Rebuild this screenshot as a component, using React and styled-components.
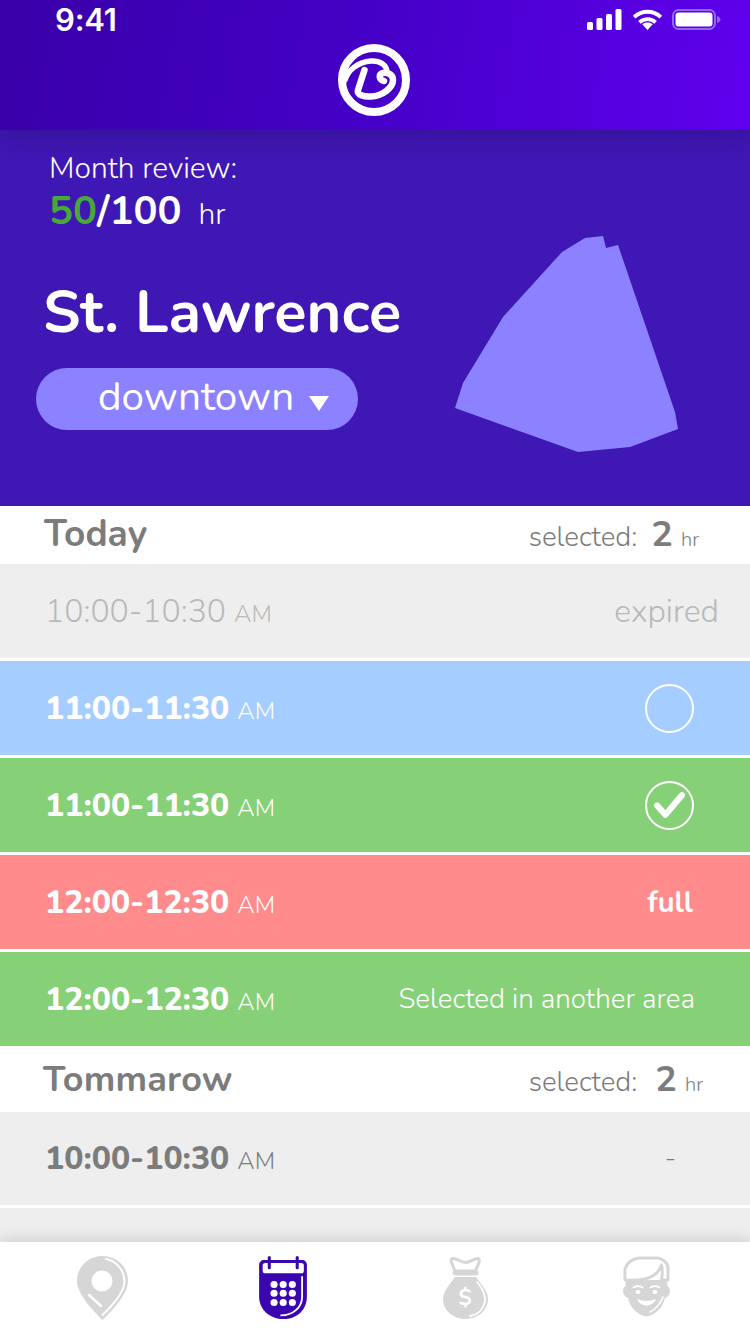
import React from "react";
import styled, { createGlobalStyle } from "styled-components";

const Global = createGlobalStyle`
  html, body { margin: 0; padding: 0; background: #fff; }
  * { box-sizing: border-box; }
`;

const FONT = `"Nunito", "Lato", "Open Sans", sans-serif`;

const Page = styled.div`
  width: 750px; height: 1334px; overflow: hidden; display: flex; flex-direction: column;
  font-family: ${FONT}; background: #fff;
`;
const Header = styled.header`
  position: relative; z-index: 2; height: 130px; flex: none;
  background: linear-gradient(100deg, #3a00a8 0%, #4300c4 45%, #6000ee 100%);
  box-shadow: 0 6px 22px rgba(30, 10, 90, 0.3);
`;
const StatusBar = styled.div`
  height: 44px; display: flex; align-items: center; justify-content: space-between;
  padding: 0 29px 0 55px;
`;
const Clock = styled.span`
  font: 600 31px/1 "Inter", sans-serif; color: #fff; margin-top: -5px; letter-spacing: -0.2px;
`;
const LogoRow = styled.div`display: flex; justify-content: center; margin-left: -2px;`;
const Hero = styled.section`
  height: 376px; flex: none; display: flex; background: #3f17b4; color: #fff;
`;
const HeroLeft = styled.div`display: flex; flex-direction: column; padding-top: 20px;`;
const ReviewLabel = styled.div`font-size: 30px; font-weight: 300; line-height: 36px; margin: 1px 0 0 49px;`;
const ReviewValue = styled.div`
  margin-left: 49px; margin-top: 1px; display: flex; align-items: baseline;
  font-size: 40px; font-weight: 700; line-height: 46px;
`;
const Done = styled.span`color: #46a93a;`;
const Unit = styled.span`font-size: 30px; font-weight: 300; margin-left: 17px;`;
const Place = styled.h1`
  margin: 39px 0 0 43px; font-size: 59.500px; font-weight: 700; line-height: 72px; white-space: nowrap;
`;
const Pill = styled.div`
  margin: 19px 0 0 36px; width: 322px; height: 62px; border-radius: 31px; background: #8c82ff;
  display: flex; align-items: center; padding: 0 0 6px 62px; gap: 15px;
  font-size: 40.500px; font-weight: 400;
`;
const Caret = styled.span`
  width: 0; height: 0; margin-top: 15px;
  border-left: 10px solid transparent; border-right: 10px solid transparent; border-top: 15px solid #fff;
`;
const MapShape = styled.svg`margin: 106px 72px 0 auto; flex: none;`;

const List = styled.div`flex: 1; min-height: 0; overflow: hidden;`;
const DayHeader = styled.div`
  height: ${p => p.$h}px; display: flex; align-items: center; justify-content: space-between;
  padding: 0 ${p => p.$right}px 0 ${p => p.$left}px; color: #7c7c7c;
`;
const DayName = styled.span`font-size: ${p => p.$size}px; font-weight: 700; letter-spacing: ${p => p.$ls || 0}px; margin-top: -2px;`;
const Selected = styled.span`display: flex; align-items: baseline; font-size: 27.700px; font-weight: 300; margin-top: -2px;`;
const SelectedNum = styled.b`font-size: 36px; font-weight: 700; margin: 0 8px 0 ${p => p.$gap}px;`;
const SelectedUnit = styled.span`font-size: 20px;`;

const TONES = {
  gray: "#eeeeee", blue: "#a6cdff", green: "#86d077", red: "#ff8b8c",
};
const Row = styled.div`
  height: ${p => p.$h || 94}px; margin-bottom: 3px; display: flex; align-items: center; justify-content: space-between;
  padding: 0 ${p => p.$right ?? 56}px 0 45px;
  background: ${p => TONES[p.$tone]};
  color: ${p => p.$ink || "#fff"};
`;
const Time = styled.span`
  font-size: 32px; font-weight: ${p => (p.$light ? 300 : 800)}; display: flex; align-items: baseline;
`;
const Meridiem = styled.span`font-size: 24px; font-weight: 300; margin-left: 8px;`;
const Note = styled.span`
  font-size: ${p => p.$size || 28}px; font-weight: ${p => p.$weight || 300};
`;
const Circle = styled.span`
  width: 49px; height: 49px; border: 2px solid #fff; border-radius: 50%;
  display: flex; align-items: center; justify-content: center;
`;

const TabBar = styled.nav`
  position: relative; z-index: 2; height: 92px; flex: none; background: #fff;
  box-shadow: 0 -3px 14px rgba(0, 0, 0, 0.13);
  display: flex; align-items: flex-start;
  padding: 14px 0 0 77px;
`;
const Tab = styled.div`display: flex; margin-left: ${p => p.$gap || 0}px;`;

const Signal = () => (
  <svg width="35" height="21" viewBox="0 0 35 21" fill="#fff">
    <rect x="0" y="13" width="6" height="8" rx="1.500" />
    <rect x="9.500" y="9" width="6" height="12" rx="1.500" />
    <rect x="19" y="5" width="6" height="16" rx="1.500" />
    <rect x="28.500" y="0" width="6" height="21" rx="1.500" />
  </svg>
);
const Wifi = () => (
  <svg width="31" height="21" viewBox="0 0 32 22" fill="none" stroke="#fff" strokeWidth="4">
    <path d="M2 8.500C10 1 22 1 30 8.500" />
    <path d="M7.500 14C12.500 9.500 19.500 9.500 24.500 14" />
    <path d="M16 22l-5.500-6C13.500 13.500 18.500 13.500 21.500 16z" fill="#fff" stroke="none" />
  </svg>
);
const Battery = () => (
  <svg width="49" height="21" viewBox="0 0 49 21" fill="none">
    <rect x="1" y="1" width="42" height="19" rx="5.500" stroke="#8f6ae8" strokeWidth="2" />
    <rect x="3.500" y="3.500" width="37" height="14" rx="3" fill="#fff" />
    <path d="M45 7c2 .6 3.500 2 3.500 3.500s-1.500 2.900-3.500 3.500z" fill="#8f6ae8" />
  </svg>
);
const StatusIcons = styled.div`display: flex; align-items: center; gap: 9.500px; margin-top: -5px;`;

const Logo = () => (
  <svg width="72" height="72" viewBox="0 0 72 72" fill="none" stroke="#fff" strokeLinecap="round" strokeLinejoin="round">
    <circle cx="36" cy="36" r="32" strokeWidth="8" />
    <path d="M7 36C10 26 20 18 33 17C42 16.500 49 21 49 28.500" strokeWidth="5.500" />
    <path d="M26.500 26L20 46C18.500 51 26 53 33 52.500C44 52 55 44 55 36C55 30 49 28 45 29C41 30 40 35 46 37" strokeWidth="6.500" />
  </svg>
);

const GRAY = "#d6d6d6";
const PinIcon = () => (
  <svg width="51" height="64" viewBox="0 0 51 64">
    <path d="M25.500 0C11 0 0 11 0 25C0 37 14 53 25.500 64C37 53 51 37 51 25C51 11 40 0 25.500 0Z" fill={GRAY} />
    <circle cx="25" cy="25" r="10.500" fill="#fff" />
    <path d="M29 3C39 5 47.500 14 47.500 25C47.500 35 36 49 25.500 59" fill="none" stroke="#fff" strokeWidth="2" strokeLinecap="round" />
    <path d="M12 39L24 50" fill="none" stroke="#fff" strokeWidth="2.500" strokeLinecap="round" />
  </svg>
);
const dotXs = [14.7, 23.7, 32.7];
const dotYs = [28, 36.7, 45.7];
const CalendarIcon = () => (
  <svg width="48" height="63" viewBox="0 0 47 62">
    <path d="M5 4H42C45 4 47 6 47 9V40C47 53 37 62 24 62C11 62 0 53 0 40V9C0 6 2 4 5 4Z" fill="#3a06b0" />
    <rect x="3.500" y="7" width="40.500" height="10" rx="2.500" fill="#fff" />
    <rect x="8.500" y="0" width="3" height="13" rx="1.500" fill="#3a06b0" />
    <rect x="36" y="0" width="3" height="13" rx="1.500" fill="#3a06b0" />
    {dotYs.map(y => dotXs.map(x => <circle key={`${x}-${y}`} cx={x} cy={y} r="3.500" fill="#fff" />))}
    <path d="M42.300 20V40C42.300 50 34 58.500 21 58.500" fill="none" stroke="#fff" strokeWidth="1.800" />
  </svg>
);
const BagIcon = () => (
  <svg width="45" height="63" viewBox="0 0 45 63">
    <path d="M9.500 2.500C13 2 18 6 22.500 6.500C27 6 32 2 35 2.500C37 3 36.500 6 35 9L32.500 15H12L9.500 9C8 6 7.500 3 9.500 2.500Z" fill="#fff" stroke={GRAY} strokeWidth="3" strokeLinejoin="round" />
    <rect x="9.500" y="14" width="26" height="5.500" rx="2.700" fill={GRAY} />
    <path d="M12 21H33C39 30 45 35 45 43C45 54 35 63 22.500 63C10 63 0 54 0 43C0 35 6 30 12 21Z" fill={GRAY} />
    <path d="M34 26C39 32 42 37 42 43C42 52 35 59 27 60" fill="none" stroke="#fff" strokeWidth="1.800" strokeLinecap="round" />
    <text x="22" y="49" fontFamily="Nunito, sans-serif" fontWeight="700" fontSize="22" fill="#fff" textAnchor="middle">$</text>
  </svg>
);
const FaceIcon = () => (
  <svg width="47" height="61" viewBox="0 0 47 61">
    <path d="M3 24H44L44.500 30C46 31 47 33 47 35C47 38 45 41 42 42C40 51 33 59 23.500 60.500C14 59 7 51 5 42C2 41 0 38 0 35C0 33 1 31 2.500 30Z" fill={GRAY} />
    <path d="M2 24V13C4 6 11 2 17 2H34C39 2 45 7 45 12V24H38.500C39.500 19 39.500 14 38.500 9C36 16 30 21 22 23C15 24.500 8 24.500 2 24Z" fill="#fff" stroke={GRAY} strokeWidth="3" strokeLinejoin="round" />
    <path d="M10.500 31.500C13 30 17 30 19.500 31.500M27.500 31.500C30 30 34 30 36.500 31.500" fill="none" stroke="#fff" strokeWidth="1.800" strokeLinecap="round" />
    <ellipse cx="15" cy="36" rx="2.500" ry="2" fill="#fff" />
    <ellipse cx="32" cy="36" rx="2.500" ry="2" fill="#fff" />
    <path d="M14 43C20 45.500 27 45.500 33 43C31 48 26 49.500 23.500 49.500C21 49.500 16 48 14 43Z" fill="#fff" />
    <path d="M40 41C37 49 33 53 27 56" fill="none" stroke="#fff" strokeWidth="1.500" strokeLinecap="round" />
  </svg>
);

const CheckMark = () => (
  <svg width="33" height="29" viewBox="0 0 32 28" fill="none" stroke="#fff" strokeWidth="6" strokeLinecap="round" strokeLinejoin="round">
    <path d="M4 14L12 23L28 4" />
  </svg>
);

function Slot({ time, tone, ink, bold = true, right, h, children }) {
  return (
    <Row $tone={tone} $ink={ink} $right={right} $h={h}>
      <Time $light={!bold}>{time}<Meridiem>AM</Meridiem></Time>
      {children}
    </Row>
  );
}

export default function App() {
  return (
    <Page>
      <Global />
      <Header>
        <StatusBar>
          <Clock>9:41</Clock>
          <StatusIcons><Signal /><Wifi /><Battery /></StatusIcons>
        </StatusBar>
        <LogoRow><Logo /></LogoRow>
      </Header>
      <Hero>
        <HeroLeft>
          <ReviewLabel>Month review:</ReviewLabel>
          <ReviewValue><span><Done>50</Done>/100</span><Unit>hr</Unit></ReviewValue>
          <Place>St. Lawrence</Place>
          <Pill>downtown<Caret /></Pill>
        </HeroLeft>
        <MapShape width="223" height="217" viewBox="455 236 223 217">
          <polygon fill="#8c82ff" points="455,408 463,383 503,317 562,252 585,238 603,236 606,248 618,245 675,412 678,429 630,447 578,452" />
        </MapShape>
      </Hero>
      <List>
        <DayHeader $h={58} $left={44} $right={51}>
          <DayName $size={37}>Today</DayName>
          <Selected>selected:<SelectedNum $gap={14}>2</SelectedNum><SelectedUnit>hr</SelectedUnit></Selected>
        </DayHeader>
        <Slot time="10:00-10:30" tone="gray" ink="#b9b9b9" bold={false} right={31}>
          <Note $size={32}>expired</Note>
        </Slot>
        <Slot time="11:00-11:30" tone="blue"><Circle /></Slot>
        <Slot time="11:00-11:30" tone="green"><Circle><CheckMark /></Circle></Slot>
        <Slot time="12:00-12:30" tone="red" right={57}><Note $size={29} $weight={700}>full</Note></Slot>
        <Slot time="12:00-12:30" tone="green" right={55}><Note $size={27.8}>Selected in another area</Note></Slot>
        <DayHeader $h={63} $left={43} $right={47}>
          <DayName $size={36} $ls={0.2}>Tommarow</DayName>
          <Selected>selected:<SelectedNum $gap={18}>2</SelectedNum><SelectedUnit>hr</SelectedUnit></Selected>
        </DayHeader>
        <Slot time="10:00-10:30" tone="gray" ink="#7c7c7c" right={74} h={93}><Note $size={27}>-</Note></Slot>
        <Row $tone="gray" />
      </List>
      <TabBar>
        <Tab><PinIcon /></Tab>
        <Tab $gap={131}><CalendarIcon /></Tab>
        <Tab $gap={136}><BagIcon /></Tab>
        <Tab $gap={135}><FaceIcon /></Tab>
      </TabBar>
    </Page>
  );
}
